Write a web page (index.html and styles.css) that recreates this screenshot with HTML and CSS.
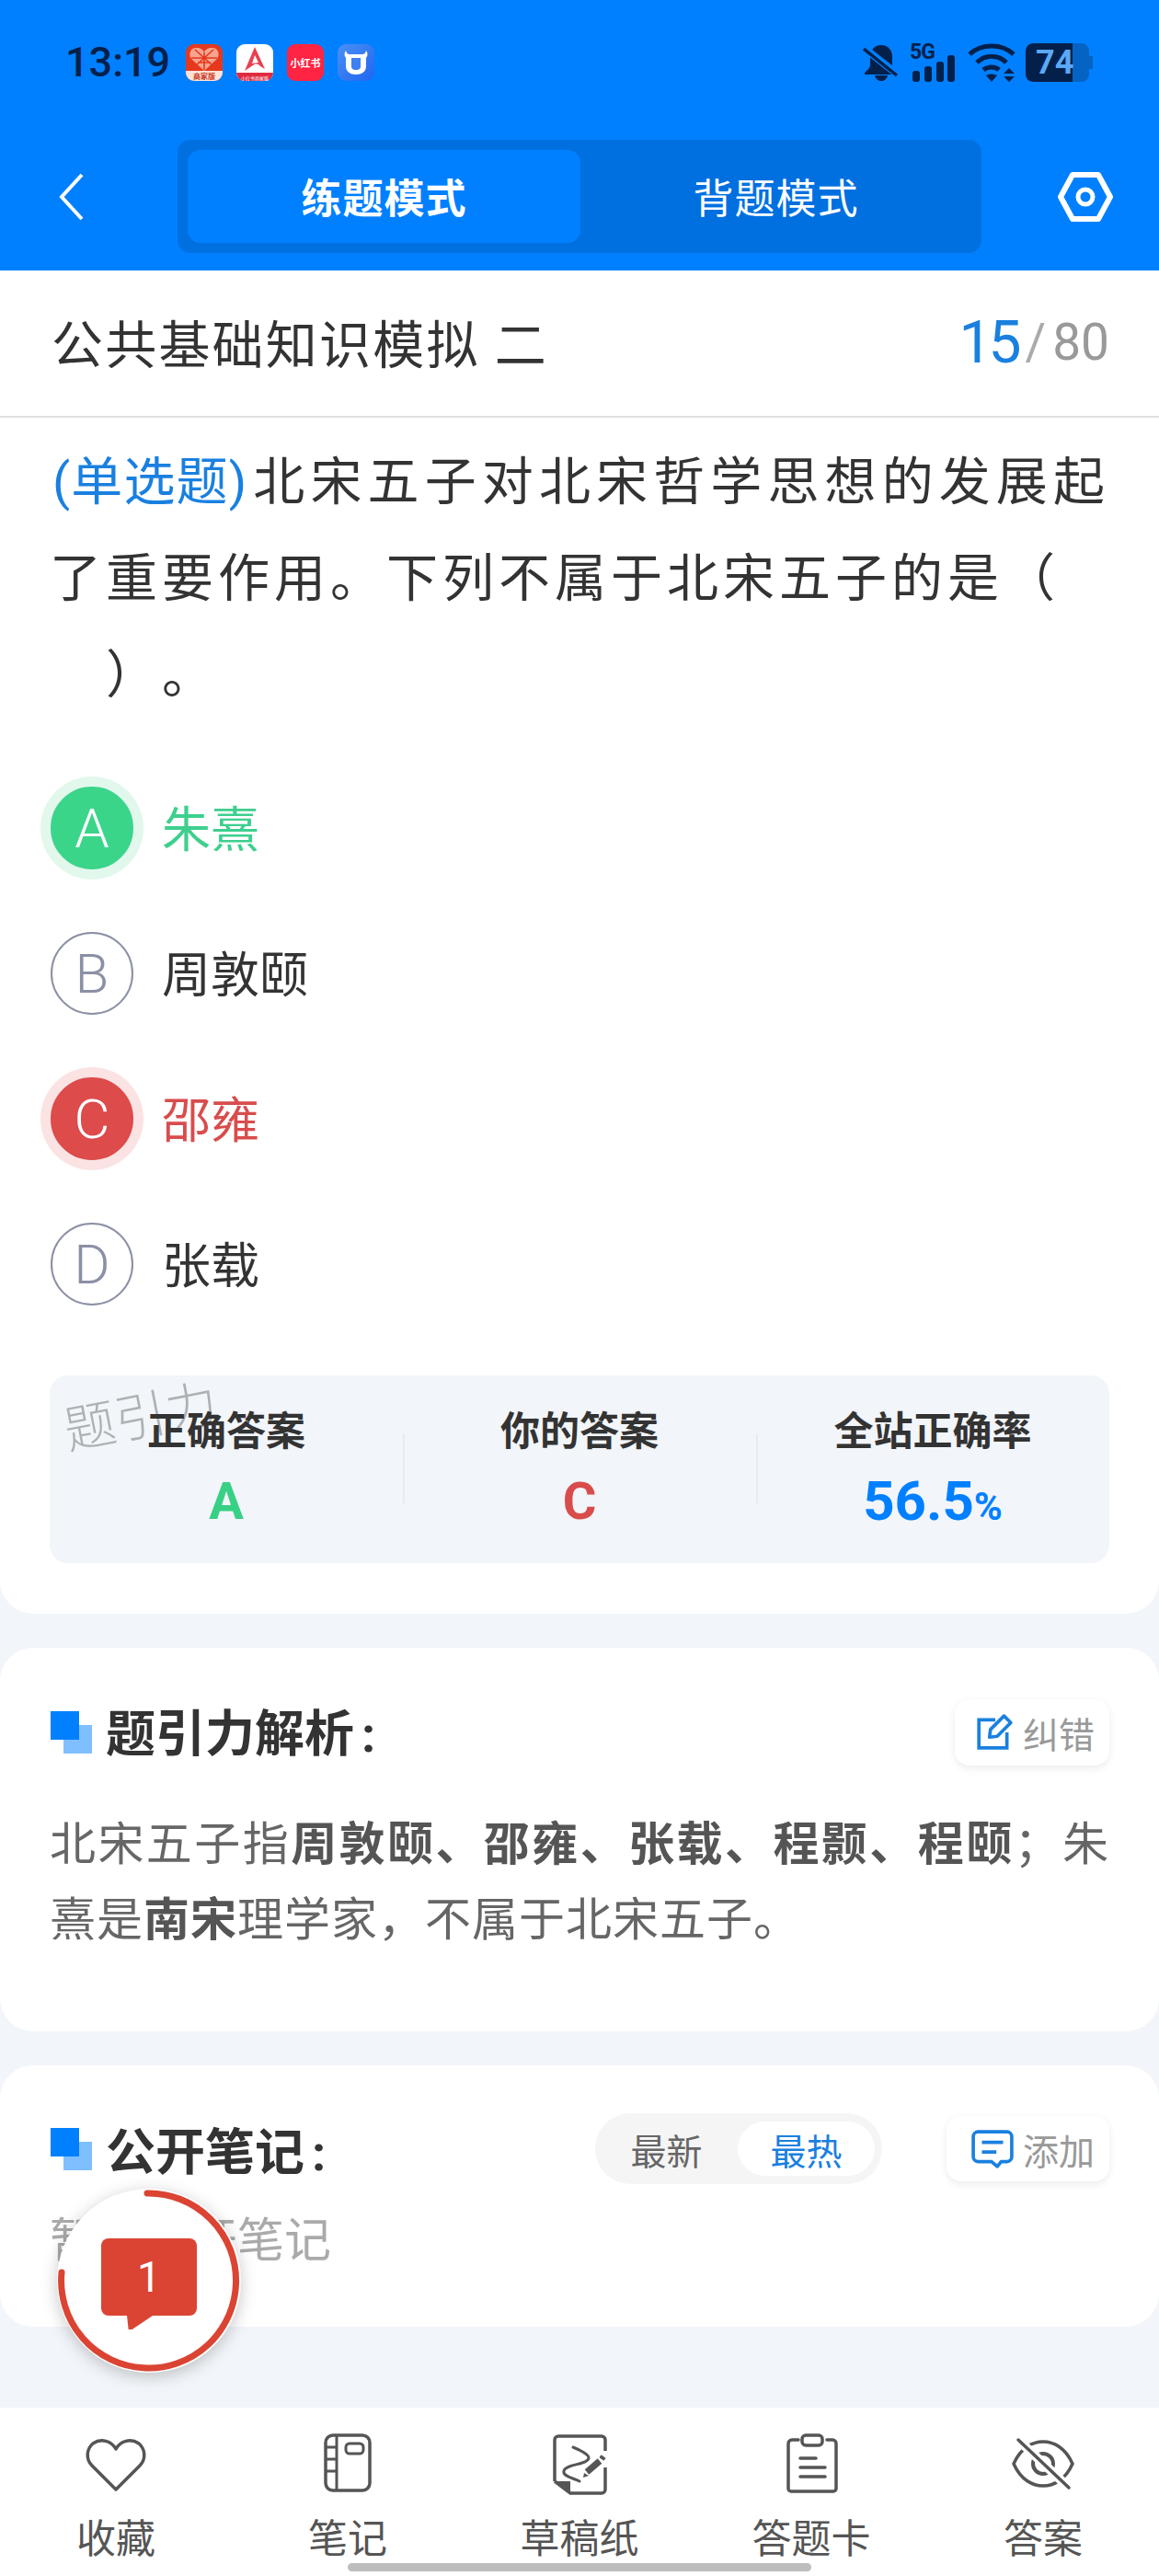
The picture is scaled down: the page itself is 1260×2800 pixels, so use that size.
FILE: index.html
```html
<!DOCTYPE html>
<html lang="zh-CN">
<head>
    <meta charset="UTF-8">
    <meta name="viewport" content="width=device-width, initial-scale=1.0">
    <title>练题模式</title>
    <link rel="stylesheet" href="styles.css">
</head>
<body>
    <header class="top-bar">
        <div class="status-bar">
            <span class="clock">13:19</span>
            <div class="app-icons">
                <svg class="app-icon" viewBox="0 0 40 40">
                    <rect width="40" height="40" rx="9" fill="#e5391f"/>
                    <path d="M20 29 L6 16 C2 10 6 3 12 4 C16 4 19 6 20 9 C21 6 24 4 28 4 C34 3 38 10 34 16 Z" fill="#f6a48f"/>
                    <path d="M20 9 V28 M6 15 L34 15 M10 6 L30 24 M30 6 L10 24 M13 20 H27" stroke="#e5391f" stroke-width="1.6" fill="none"/>
                    <path d="M0 29 H40 V31 A9 9 0 0 1 31 40 H9 A9 9 0 0 1 0 31 Z" fill="#fde3d8"/>
                    <text x="20" y="38" class="app-tiny" fill="#c8341c">商家版</text>
                </svg>
                <svg class="app-icon" viewBox="0 0 40 40">
                    <rect width="40" height="40" rx="9" fill="#fff"/>
                    <path d="M20 3 L31 27 L26 24 C23 21 21 21 18 23 L9 29 Z" fill="#e8404f"/>
                    <path d="M20 12 L24 20 L17 21 Z" fill="#fff"/>
                    <path d="M0 31 H40 A9 9 0 0 1 31 40 H9 A9 9 0 0 1 0 31 Z" fill="#e02b3f"/>
                    <text x="20" y="38.5" class="app-micro" fill="#fff">小红书商家版</text>
                </svg>
                <svg class="app-icon" viewBox="0 0 40 40">
                    <rect width="40" height="40" rx="9" fill="#ff2442"/>
                    <text x="20" y="25" class="app-label" fill="#fff">小红书</text>
                </svg>
                <svg class="app-icon" viewBox="0 0 40 40">
                    <defs>
                        <linearGradient id="bull-bg" x1="0" y1="0" x2="1" y2="1">
                            <stop offset="0" stop-color="#4a90f5"/>
                            <stop offset="1" stop-color="#1f66f0"/>
                        </linearGradient>
                    </defs>
                    <rect width="40" height="40" rx="9" fill="url(#bull-bg)"/>
                    <path d="M9 7 C10 10 11 11 13 11 H27 C29 11 30 10 31 7 C33 10 33 12 31 15 V24 C31 30 26 33 20 33 C14 33 9 30 9 24 V15 C7 12 7 10 9 7 Z" fill="#fff"/>
                    <path d="M15 15 H25 V24 C25 27 23 28 20 28 C17 28 15 27 15 24 Z" fill="#3d80f3"/>
                </svg>
            </div>
            <div class="system-icons">
                <svg class="bell-icon" viewBox="0 0 40 40">
                    <path d="M20 1 C28 1 32 7 32 14 V22 C32 26 35 28 38 31 V33 H2 V31 C5 28 8 26 8 22 V14 C8 7 12 1 20 1 Z" fill="#03204a"/>
                    <path d="M13 34 H27 C26 38 23 40 20 40 C17 40 14 38 13 34 Z" fill="#03204a"/>
                    <path d="M1 4 L38 33" stroke="#0080ff" stroke-width="8" fill="none"/>
                    <path d="M1 5 L37 34" stroke="#03204a" stroke-width="3.5" fill="none"/>
                </svg>
                <div class="signal">
                    <span class="signal-label">5G</span>
                    <svg class="signal-icon" viewBox="0 0 50 42">
                        <rect x="3" y="30" width="8" height="12" rx="3" fill="#03204a"/>
                        <rect x="16" y="25" width="8" height="17" rx="3" fill="#03204a"/>
                        <rect x="29" y="20" width="8" height="22" rx="3" fill="#03204a"/>
                        <rect x="41" y="13" width="8" height="29" rx="3" fill="#03204a"/>
                    </svg>
                </div>
                <svg class="wifi-icon" viewBox="0 0 52 42">
                    <path d="M2 12 C15 0 37 0 50 12" stroke="#03204a" stroke-width="5" fill="none"/>
                    <path d="M10 21 C19 12 33 12 42 21" stroke="#03204a" stroke-width="5" fill="none"/>
                    <path d="M17 29 C22 25 30 25 34 29" stroke="#03204a" stroke-width="5" fill="none"/>
                    <path d="M20 35 C23 33 28 33 32 35 L26 42 Z" fill="#03204a"/>
                    <path d="M45 27 L51 33 H39 Z M39 36 H51 L45 42 Z" fill="#03204a"/>
                </svg>
                <div class="battery">
                    <svg class="battery-icon" viewBox="0 0 74 42">
                        <path d="M51 0 H60 C66 0 69 4 69 9 V14 H73 V28 H69 V33 C69 38 66 42 60 42 H51 Z" fill="#0563c4"/>
                        <path d="M51 0 H9 C3 0 0 4 0 9 V33 C0 38 3 42 9 42 H51 Z" fill="#03204a"/>
                    </svg>
                    <span class="battery-label">74</span>
                </div>
            </div>
        </div>
        <nav class="nav-bar">
            <svg class="back-icon" viewBox="0 0 27 52">
                <path d="M25 2 L3 26 L25 50" stroke="#fff" stroke-width="4" fill="none"/>
            </svg>
            <div class="mode-tabs">
                <div class="mode-tab active">练题模式</div>
                <div class="mode-tab">背题模式</div>
            </div>
            <svg class="settings-icon" viewBox="0 0 60 54">
                <path d="M16 3 H44 L57 27 L44 51 H16 L3 27 Z" stroke="#fff" stroke-width="6" stroke-linejoin="round" fill="none"/>
                <circle cx="30" cy="27" r="8" stroke="#fff" stroke-width="5" fill="none"/>
            </svg>
        </nav>
    </header>

    <div class="paper-bar">
        <span class="paper-title">公共基础知识模拟 二</span>
        <span class="paper-progress"><b>15</b><i>/</i>80</span>
    </div>

    <section class="card question-card">
        <p class="question"><span class="question-type">(单选题)</span>北宋五子对北宋哲学思想的发展起了重要作用。下列不属于北宋五子的是（<br>　）。</p>
        <ul class="options">
            <li class="option correct"><span class="option-mark">A</span><span class="option-text">朱熹</span></li>
            <li class="option"><span class="option-mark">B</span><span class="option-text">周敦颐</span></li>
            <li class="option wrong"><span class="option-mark">C</span><span class="option-text">邵雍</span></li>
            <li class="option"><span class="option-mark">D</span><span class="option-text">张载</span></li>
        </ul>
        <div class="stats">
            <span class="watermark">题引力</span>
            <div class="stat">
                <div class="stat-label">正确答案</div>
                <div class="stat-value green">A</div>
            </div>
            <div class="stat">
                <div class="stat-label">你的答案</div>
                <div class="stat-value red">C</div>
            </div>
            <div class="stat">
                <div class="stat-label">全站正确率</div>
                <div class="stat-value blue wide">56.5<small>%</small></div>
            </div>
        </div>
    </section>

    <section class="card analysis-card">
        <div class="card-head">
            <span class="head-mark"></span>
            <h2 class="card-title">题引力解析<span class="title-colon">:</span></h2>
            <div class="small-btn">
                <svg class="btn-icon" viewBox="0 0 40 40">
                    <path d="M21 7 H4 V36 H33 V20" stroke="#1a80e0" stroke-width="3.5" fill="none"/>
                    <path d="M15 25 L16 17 L30 3 L37 10 L23 24 Z" stroke="#1a80e0" stroke-width="3.5" stroke-linejoin="round" fill="none"/>
                </svg>
                纠错
            </div>
        </div>
        <p class="analysis-text">北宋五子指<b>周敦颐、邵雍、张载、程颢、程颐</b>；朱熹是<b>南宋</b>理学家，不属于北宋五子。</p>
    </section>

    <section class="card notes-card">
        <div class="card-head notes-head">
            <span class="head-mark"></span>
            <h2 class="card-title">公开笔记<span class="title-colon">:</span></h2>
            <div class="sort-switch">
                <span class="sort-item">最新</span>
                <span class="sort-item active">最热</span>
            </div>
            <div class="small-btn add-btn">
                <svg class="btn-icon" viewBox="0 0 44 40">
                    <path d="M7 2 H37 A5 5 0 0 1 42 7 V28 A5 5 0 0 1 37 33 H31 L27 38 L21 33 H7 A5 5 0 0 1 2 28 V7 A5 5 0 0 1 7 2 Z" stroke="#1a80e0" stroke-width="3.5" stroke-linejoin="round" fill="none"/>
                    <path d="M11 13 H33 M11 23 H26" stroke="#1a80e0" stroke-width="3.5" fill="none"/>
                </svg>
                添加
            </div>
        </div>
        <p class="notes-empty">暂无公开笔记</p>
    </section>

    <div class="comment-float">
        <svg class="comment-ring" viewBox="0 0 200 200">
            <path d="M98 5 A95 95 0 1 1 5 91" stroke="#db4433" stroke-width="7" stroke-linecap="round" fill="none"/>
        </svg>
        <div class="comment-bubble">1</div>
    </div>

    <footer class="tool-bar">
        <div class="tool">
            <svg class="tool-icon" viewBox="0 0 72 72">
                <path d="M36 64 L10 38 C3 31 4 20 11 14 C20 8 31 11 36 20 C41 11 52 8 61 14 C68 20 69 31 62 38 Z" stroke="#555" stroke-width="3.5" stroke-linejoin="round" fill="none"/>
            </svg>
            <span>收藏</span>
        </div>
        <div class="tool">
            <svg class="tool-icon" viewBox="0 0 72 72">
                <rect x="12" y="5" width="48" height="60" rx="8" stroke="#555" stroke-width="3.5" fill="none"/>
                <path d="M24 5 V65 M12 18 H24 M12 31 H24 M12 44 H24" stroke="#555" stroke-width="3" fill="none"/>
                <rect x="34" y="14" width="19" height="11" rx="4" stroke="#555" stroke-width="3" fill="none"/>
            </svg>
            <span>笔记</span>
        </div>
        <div class="tool">
            <svg class="tool-icon" viewBox="0 0 72 72">
                <path d="M9 55 V10 A4 4 0 0 1 13 6 H60 A4 4 0 0 1 64 10 V22 M64 40 V64 A4 4 0 0 1 60 68 H26 L9 55" stroke="#555" stroke-width="3.5" fill="none"/>
                <path d="M10 55 H26 V67 Z" fill="#555"/>
                <path d="M29 18 C36 21 47 26 46 30 C45 35 33 36 25 39 C17 42 17 47 24 50 C28 52 32 53 36 55" stroke="#555" stroke-width="3" stroke-linecap="round" fill="none"/>
                <path d="M58 33 L44 45" stroke="#555" stroke-width="7" fill="none"/>
                <path d="M62 28 L60 31" stroke="#555" stroke-width="6" fill="none"/>
                <path d="M41 46 L46 49 L40 51 Z" fill="#555"/>
            </svg>
            <span>草稿纸</span>
        </div>
        <div class="tool">
            <svg class="tool-icon" viewBox="0 0 72 72">
                <path d="M22 10 H15 A4 4 0 0 0 11 14 V63 A3 3 0 0 0 14 66 H60 A3 3 0 0 0 63 63 V14 A4 4 0 0 0 59 10 H53" stroke="#555" stroke-width="3.5" stroke-linecap="round" fill="none"/>
                <rect x="26" y="5" width="22" height="11" rx="4" stroke="#555" stroke-width="3.5" fill="none"/>
                <path d="M24 30 H41 M24 40 H51 M24 50 H51" stroke="#555" stroke-width="3.5" stroke-linecap="round" fill="none"/>
            </svg>
            <span>答题卡</span>
        </div>
        <div class="tool">
            <svg class="tool-icon" viewBox="0 0 72 72">
                <path d="M4 36 C12 18 25 12 36 12 C47 12 60 18 68 36 C60 54 47 60 36 60 C25 60 12 54 4 36 Z" stroke="#555" stroke-width="3.5" fill="none"/>
                <circle cx="36" cy="36" r="11" stroke="#555" stroke-width="4" fill="none"/>
                <path d="M9 10 L64 62" stroke="#fff" stroke-width="10" fill="none"/>
                <path d="M9 10 L64 62" stroke="#555" stroke-width="3.5" stroke-linecap="round" fill="none"/>
            </svg>
            <span>答案</span>
        </div>
        <div class="home-indicator"></div>
    </footer>
</body>
</html>
```

FILE: styles.css
```css
* {
    box-sizing: border-box;
}

body {
    margin: 0;
    width: 1260px;
    height: 2800px;
    overflow: hidden;
    position: relative;
    display: flex;
    flex-direction: column;
    background: #f2f5f9;
    color: #333;
    font-family: Roboto, "Noto Sans CJK SC", sans-serif;
    text-spacing-trim: space-all;
}

/* status bar + nav */
.top-bar {
    height: 294px;
    background: #0080ff;
}

.status-bar {
    height: 88px;
    padding: 48px 71px 0 71px;
    display: flex;
    align-items: center;
    color: #03204a;
}

.clock {
    width: 131px;
    font-size: 45px;
    font-weight: 500;
    line-height: 40px;
}

.app-icons {
    display: flex;
    gap: 15px;
}

.app-icon {
    width: 40px;
    height: 40px;
}

.app-tiny {
    font-size: 8px;
    font-weight: 700;
    text-anchor: middle;
}

.app-micro {
    font-size: 5px;
    text-anchor: middle;
}

.app-label {
    font-size: 11px;
    font-weight: 700;
    text-anchor: middle;
}

.system-icons {
    margin-left: auto;
    display: flex;
    align-items: center;
}

.bell-icon {
    width: 40px;
    height: 40px;
}

.signal {
    position: relative;
    width: 50px;
    height: 42px;
    margin-left: 11px;
}

.signal-icon {
    display: block;
    width: 50px;
    height: 42px;
}

.signal-label {
    position: absolute;
    left: 0;
    top: -2px;
    font-size: 23px;
    font-weight: 700;
    line-height: 23px;
    letter-spacing: -1px;
}

.wifi-icon {
    width: 52px;
    height: 42px;
    margin-left: 13px;
}

.battery {
    position: relative;
    width: 74px;
    height: 42px;
    margin-left: 11px;
}

.battery-icon {
    display: block;
    width: 74px;
    height: 42px;
}

.battery-label {
    position: absolute;
    left: 11px;
    top: 0;
    width: 40px;
    text-align: center;
    font-size: 36px;
    font-weight: 700;
    line-height: 42px;
    color: #5aa9f7;
}

.nav-bar {
    margin-top: 64px;
    height: 123px;
    padding: 0 50px 0 64px;
    display: flex;
    align-items: center;
}

.back-icon {
    width: 27px;
    height: 52px;
}

.mode-tabs {
    margin-left: 102px;
    width: 874px;
    height: 123px;
    padding: 11px;
    display: flex;
    background: #0070e0;
    border-radius: 14px;
}

.mode-tab {
    flex: 1;
    display: flex;
    align-items: center;
    justify-content: center;
    padding-bottom: 2px;
    color: #fff;
    font-size: 44px;
    letter-spacing: 1px;
    border-radius: 14px;
}

.mode-tab.active {
    flex: 0 0 427px;
    background: #0080ff;
    font-weight: 700;
}

.settings-icon {
    margin-left: 83px;
    width: 60px;
    height: 54px;
}

/* paper title */
.paper-bar {
    height: 160px;
    padding: 0 54px 0 56px;
    display: flex;
    align-items: center;
    justify-content: space-between;
    background: #fff;
    border-bottom: 2px solid #e0e0e0;
}

.paper-title {
    margin-bottom: 6px;
    font-size: 56px;
    letter-spacing: 2.2px;
}

.paper-progress {
    display: flex;
    align-items: center;
    margin-bottom: 2px;
    font-size: 55px;
    color: #999;
}

.paper-progress b {
    font-size: 64px;
    font-weight: 400;
    letter-spacing: -4px;
    color: #1a80e0;
}

.paper-progress i {
    margin: 0 7px 0 8px;
    font-style: normal;
    color: #aaa;
}

/* cards */
.card {
    background: #fff;
    border-radius: 36px;
    padding: 0 54px;
}

.question-card {
    border-radius: 0 0 36px 36px;
    padding-top: 18px;
    padding-bottom: 55px;
}

.question {
    margin: 0;
    font-size: 56px;
    letter-spacing: 5px;
    line-height: 105px;
    text-align: justify;
}

.question-type {
    margin: 0 6px 0 3px;
    letter-spacing: 0;
    color: #1a80e0;
}

.options {
    list-style: none;
    margin: 34px 0 0;
    padding: 0;
}

.option {
    height: 158px;
    display: flex;
    align-items: center;
    font-size: 53px;
    color: #333;
}

.option-text {
    margin-bottom: 4px;
}

.option-mark {
    flex: none;
    width: 90px;
    height: 90px;
    margin: 0 31px 0 1px;
    display: flex;
    align-items: center;
    justify-content: center;
    border: 2px solid #8b90a5;
    border-radius: 50%;
    color: #8b90a5;
    font-size: 60px;
    font-weight: 300;
}

.option.correct {
    color: #3ecf8e;
}

.option.correct .option-mark {
    background: #3bd58a;
    border-color: #3bd58a;
    color: #fff;
    box-shadow: 0 0 0 11px #e2f8ed;
}

.option.wrong {
    color: #d94c4c;
}

.option.wrong .option-mark {
    background: #dd4b4b;
    border-color: #dd4b4b;
    color: #fff;
    box-shadow: 0 0 0 11px #fbe3e3;
}

.stats {
    position: relative;
    margin-top: 42px;
    height: 204px;
    display: grid;
    grid-template-columns: repeat(3, 1fr);
    background: #f2f5f9;
    border-radius: 20px;
}

.watermark {
    position: absolute;
    left: 14px;
    top: 0;
    font-size: 56px;
    font-weight: 300;
    color: rgba(0, 0, 0, 0.28);
    transform: rotate(-11deg);
}

.stat {
    position: relative;
    padding-top: 30px;
    text-align: center;
}

.stat + .stat::before {
    content: "";
    position: absolute;
    left: 0;
    top: 63px;
    height: 76px;
    border-left: 2px solid #e8ebef;
}

.stat-label {
    font-size: 43px;
    font-weight: 700;
    line-height: 62px;
}

.stat-value {
    margin-top: 12px;
    font-size: 56px;
    font-weight: 700;
    line-height: 66px;
}

.stat-value.wide {
    font-size: 60px;
}

.stat-value small {
    font-size: 42px;
}

.green {
    color: #37d085;
}

.red {
    color: #d94c4c;
}

.blue {
    color: #0080ff;
}

.analysis-card {
    margin-top: 37px;
    padding-top: 56px;
    padding-bottom: 80px;
}

.analysis-card .card-title {
    margin-bottom: 5px;
}

.card-head {
    height: 72px;
    display: flex;
    align-items: center;
}

.head-mark {
    position: relative;
    flex: none;
    width: 45px;
    height: 46px;
    margin: 0 15px 0 1px;
}

.head-mark::before,
.head-mark::after {
    content: "";
    position: absolute;
    width: 31px;
    height: 31px;
}

.head-mark::after {
    left: 0;
    top: 0;
    background: #0080ff;
}

.head-mark::before {
    right: 0;
    bottom: 0;
    background: #80bfff;
}

.card-title {
    margin: 0;
    font-size: 54px;
    font-weight: 700;
}

.title-colon {
    margin-left: 8px;
}

.small-btn {
    margin-left: auto;
    height: 72px;
    padding: 0 16px 0 22px;
    display: flex;
    align-items: center;
    gap: 10px;
    background: #fff;
    border-radius: 16px;
    box-shadow: 0 3px 10px rgba(0, 0, 0, 0.08);
    color: #999;
    font-size: 39px;
}

.btn-icon {
    width: 42px;
    height: 42px;
}

.analysis-text {
    margin: 45px 0 0;
    font-size: 50px;
    letter-spacing: 1px;
    line-height: 82px;
    text-align: justify;
    color: #666;
}

.analysis-text b {
    color: #555;
}

.notes-card {
    margin-top: 37px;
    height: 284px;
    padding-top: 52px;
}

.notes-head {
    height: 77px;
}

.sort-switch {
    margin-left: auto;
    width: 312px;
    height: 77px;
    padding: 9px 8px 9px 0;
    display: flex;
    background: #f5f5f5;
    border-radius: 39px;
}

.sort-item {
    flex: 1;
    display: flex;
    align-items: center;
    justify-content: center;
    border-radius: 30px;
    font-size: 39px;
    color: #666;
}

.sort-item.active {
    flex: 0 0 149px;
    background: #fff;
    color: #1a80e0;
}

.add-btn {
    margin-left: 70px;
    height: 71px;
    padding: 0 16px 0 27px;
}

.add-btn .btn-icon {
    width: 46px;
}

.notes-empty {
    margin: 27px 0 0;
    font-size: 51px;
    line-height: 70px;
    color: #aaa;
}

/* floating comment button */
.comment-float {
    position: absolute;
    left: 62px;
    top: 2379px;
    width: 200px;
    height: 200px;
    border-radius: 50%;
    background: #fff;
    box-shadow: 0 4px 18px rgba(0, 0, 0, 0.22);
}

.comment-ring {
    position: absolute;
    left: 0;
    top: 0;
    width: 200px;
    height: 200px;
}

.comment-bubble {
    position: absolute;
    left: 48px;
    top: 54px;
    width: 104px;
    height: 84px;
    display: flex;
    align-items: center;
    justify-content: center;
    background: #db4433;
    border-radius: 8px;
    color: #fff;
    font-size: 46px;
}

.comment-bubble::after {
    content: "";
    position: absolute;
    left: 28px;
    top: 84px;
    width: 28px;
    height: 15px;
    background: #db4433;
    clip-path: polygon(0 0, 100% 0, 20% 100%, 6% 100%);
}

/* bottom tools */
.tool-bar {
    position: relative;
    margin-top: auto;
    height: 183px;
    display: grid;
    grid-template-columns: repeat(5, 1fr);
    background: #fff;
}

.tool {
    padding-top: 25px;
    display: flex;
    flex-direction: column;
    align-items: center;
    gap: 16px;
    font-size: 43px;
    line-height: 60px;
    color: #555;
}

.tool-icon {
    width: 72px;
    height: 72px;
}

.home-indicator {
    position: absolute;
    left: 378px;
    top: 169px;
    width: 504px;
    height: 9px;
    background: #bdbdbd;
    border-radius: 5px;
}
```
